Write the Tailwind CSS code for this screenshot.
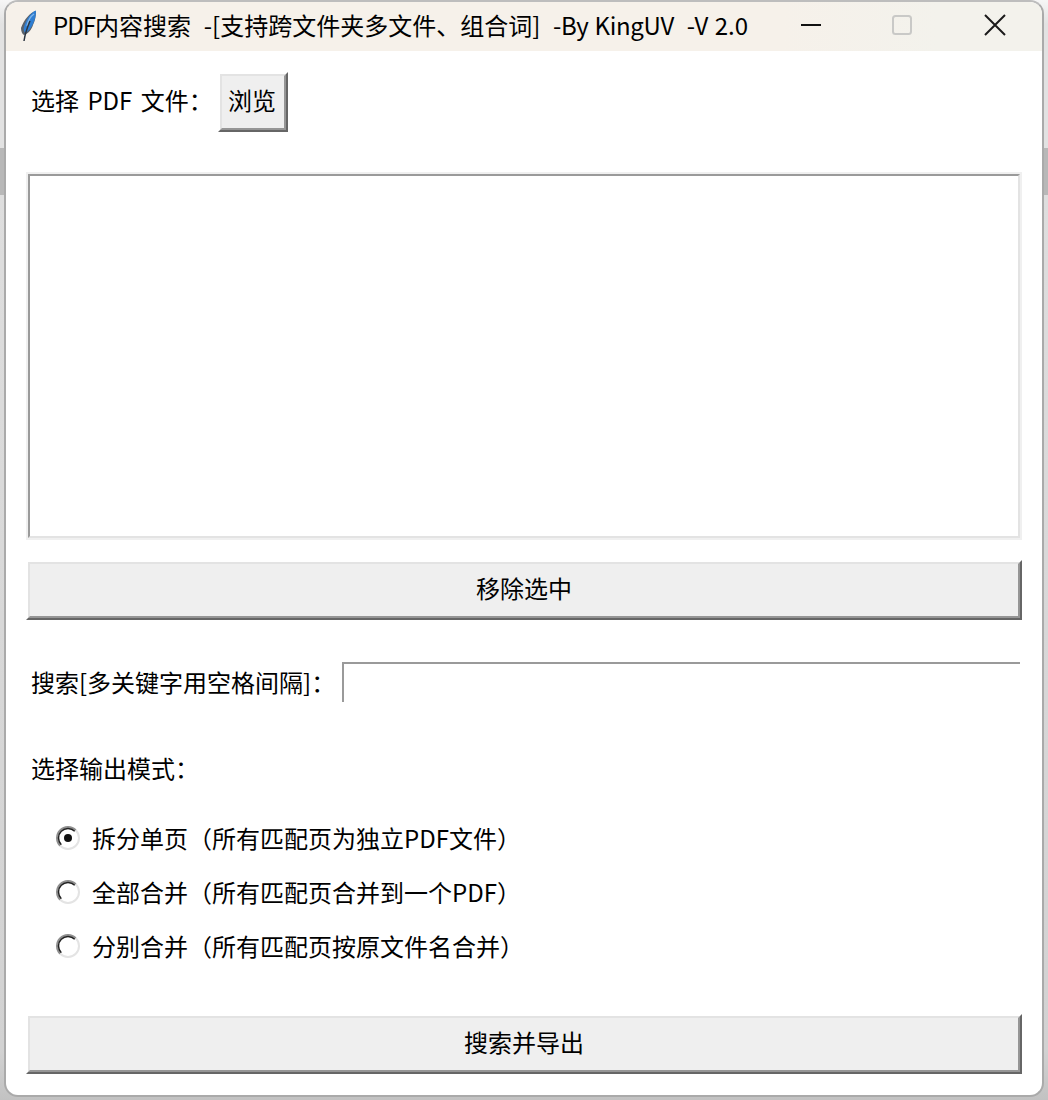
<!DOCTYPE html>
<html lang="en">

<head>
    <meta charset="UTF-8">
    <meta name="viewport" content="width=device-width, initial-scale=1.0">
    <title>PDF内容搜索</title>
    <script src="https://cdn.jsdelivr.net/npm/@tailwindcss/browser@4"></script>
</head>

<body class="bg-white overflow-hidden">

    <!-- desktop behind the window -->
    <div class="w-[1048px] h-[1100px] px-[4px] bg-[linear-gradient(#f6f6f6_0,#e2e2e2_24px,#e2e2e2_148px,#b8b8b8_148px,#b8b8b8_195px,#dedede_195px,#d2d2d2_1050px,#c2c2c2_1100px)] font-['Noto_Sans_CJK_SC',sans-serif] text-black">

        <div class="w-[1040px] h-[1097px] bg-white rounded-[14px] border-2 border-[#aaaaaa] border-t-[#bdbdbd] overflow-hidden flex flex-col">

            <!-- title bar -->
            <div class="h-[49px] shrink-0 bg-[linear-gradient(90deg,#f6f1ea_75%,#f3f2ec_90%)] flex items-center pl-[10px] text-[24px]">
                <svg class="w-[24px] h-[38px] shrink-0" viewBox="0 0 24 38">
                    <path d="M20 3C14 4 8 12 5 20c0 3 1 6 3 7 4-1 8-6 9-10 2-4 3-9 3-14z" fill="#59616b" />
                    <path d="M20 2.5C15 4 10 12 8 19c-1 2 0 4 1 6 3-1 6-5 8-9 2-4 3-9 3-13.500z" fill="#2f7ed2" />
                    <path d="M18 6C15 8 12 13 11 18" fill="none" stroke="#7db4ea" stroke-width="1.500" />
                    <path d="M14 13C11 20 9 26 8 33" fill="none" stroke="#2a3440" stroke-width="1.500" />
                </svg>
                <span class="ml-[13px] w-[747px] whitespace-pre leading-none mb-[3px] [word-spacing:1px]"><span class="tracking-[-1px]">PDF</span>内容搜索  -[支持跨文件夹多文件、组合词]  <span class="tracking-[-0.3px]">-By KingUV</span>  -V 2.0</span>
                <svg class="w-[22px] h-[22px] mb-[3px] shrink-0" viewBox="0 0 22 22"><path d="M1 11h20" stroke="#111" stroke-width="2" /></svg>
                <svg class="w-[22px] h-[22px] mb-[3px] ml-[69px] shrink-0" viewBox="0 0 22 22"><rect x="2" y="2" width="18" height="18" rx="2.5" fill="none" stroke="#c9c9c7" stroke-width="2" /></svg>
                <svg class="w-[24px] h-[24px] mb-[3px] ml-[70px] shrink-0" viewBox="0 0 24 24"><path d="M2 2l20 20M22 2L2 22" stroke="#1a1a1a" stroke-width="2" /></svg>
            </div>

            <!-- file picker row -->
            <div class="h-[60px] mt-[21px] shrink-0 flex items-center pl-[25px] text-[24px]">
                <span class="w-[187px] whitespace-pre mb-[4px] [word-spacing:3px]">选择 PDF 文件：</span>
                <button class="w-[70px] h-[60px] border-2 border-t-white border-l-white border-r-[#666666] border-b-[#666666]">
                    <span class="flex items-center justify-center h-full pb-[4px] pr-[2px] bg-[#efefef] border-2 border-t-[#e3e3e3] border-l-[#e3e3e3] border-r-[#969696] border-b-[#969696]">浏览</span>
                </button>
            </div>

            <!-- file list -->
            <div class="w-[996px] h-[368px] ml-[20px] mt-[40px] shrink-0 border-2 border-[#f0f0f0]">
                <div class="h-full bg-white border-2 border-t-[#9a9a9a] border-l-[#9a9a9a] border-r-[#e3e3e3] border-b-[#e3e3e3]"></div>
            </div>

            <button class="w-[996px] h-[60px] ml-[20px] mt-[20px] shrink-0 text-[24px] border-2 border-t-white border-l-white border-r-[#666666] border-b-[#666666]">
                <span class="flex items-center justify-center h-full pb-[4px] bg-[#efefef] border-2 border-t-[#e3e3e3] border-l-[#e3e3e3] border-r-[#969696] border-b-[#969696]">移除选中</span>
            </button>

            <!-- keyword row -->
            <div class="h-[40px] mt-[42px] shrink-0 flex items-center pl-[25px] text-[24px]">
                <span class="w-[311px] whitespace-pre">搜索[多关键字用空格间隔]：</span>
                <div class="w-[678px] h-[40px] bg-white border-t-2 border-l-2 border-[#9a9a9a]"></div>
            </div>

            <div class="h-[30px] mt-[51px] mb-[2px] shrink-0 pl-[25px] text-[24px] leading-[30px]">选择输出模式：</div>

            <!-- output modes -->
            <div class="mt-[39px] pl-[50px] flex flex-col gap-[24px] text-[24px] leading-[30px] shrink-0">
                <label class="flex items-center h-[30px]">
                    <svg class="w-[24px] h-[24px] mb-[2px] shrink-0" viewBox="0 0 24 24">
                        <path d="M19.780 4.220A11 11 0 0 0 4.220 19.780" fill="none" stroke="#8f8f8f" stroke-width="2" />
                        <path d="M18.720 5.280A9.500 9.500 0 0 0 5.280 18.720" fill="none" stroke="#222222" stroke-width="1.500" />
                        <path d="M4.220 19.780A11 11 0 0 0 19.780 4.220" fill="none" stroke="#e4e4e4" stroke-width="2" />
                        <circle cx="12" cy="12" r="4" fill="#111111" />
                    </svg>
                    <span class="ml-[12px] mb-[2px] whitespace-pre">拆分单页（所有匹配页为独立PDF文件）</span>
                </label>
                <label class="flex items-center h-[30px]">
                    <svg class="w-[24px] h-[24px] mb-[2px] shrink-0" viewBox="0 0 24 24">
                        <path d="M19.780 4.220A11 11 0 0 0 4.220 19.780" fill="none" stroke="#8f8f8f" stroke-width="2" />
                        <path d="M18.720 5.280A9.500 9.500 0 0 0 5.280 18.720" fill="none" stroke="#222222" stroke-width="1.500" />
                        <path d="M4.220 19.780A11 11 0 0 0 19.780 4.220" fill="none" stroke="#e4e4e4" stroke-width="2" />
                    </svg>
                    <span class="ml-[12px] mb-[2px] whitespace-pre">全部合并（所有匹配页合并到一个PDF）</span>
                </label>
                <label class="flex items-center h-[30px]">
                    <svg class="w-[24px] h-[24px] mb-[2px] shrink-0" viewBox="0 0 24 24">
                        <path d="M19.780 4.220A11 11 0 0 0 4.220 19.780" fill="none" stroke="#8f8f8f" stroke-width="2" />
                        <path d="M18.720 5.280A9.500 9.500 0 0 0 5.280 18.720" fill="none" stroke="#222222" stroke-width="1.500" />
                        <path d="M4.220 19.780A11 11 0 0 0 19.780 4.220" fill="none" stroke="#e4e4e4" stroke-width="2" />
                    </svg>
                    <span class="ml-[12px] mb-[2px] whitespace-pre">分别合并（所有匹配页按原文件名合并）</span>
                </label>
            </div>

            <button class="w-[996px] h-[60px] ml-[20px] mt-[52px] shrink-0 text-[24px] border-2 border-t-white border-l-white border-r-[#666666] border-b-[#666666]">
                <span class="flex items-center justify-center h-full pb-[4px] bg-[#efefef] border-2 border-t-[#e3e3e3] border-l-[#e3e3e3] border-r-[#969696] border-b-[#969696]">搜索并导出</span>
            </button>
        </div>
    </div>

</body>

</html>
